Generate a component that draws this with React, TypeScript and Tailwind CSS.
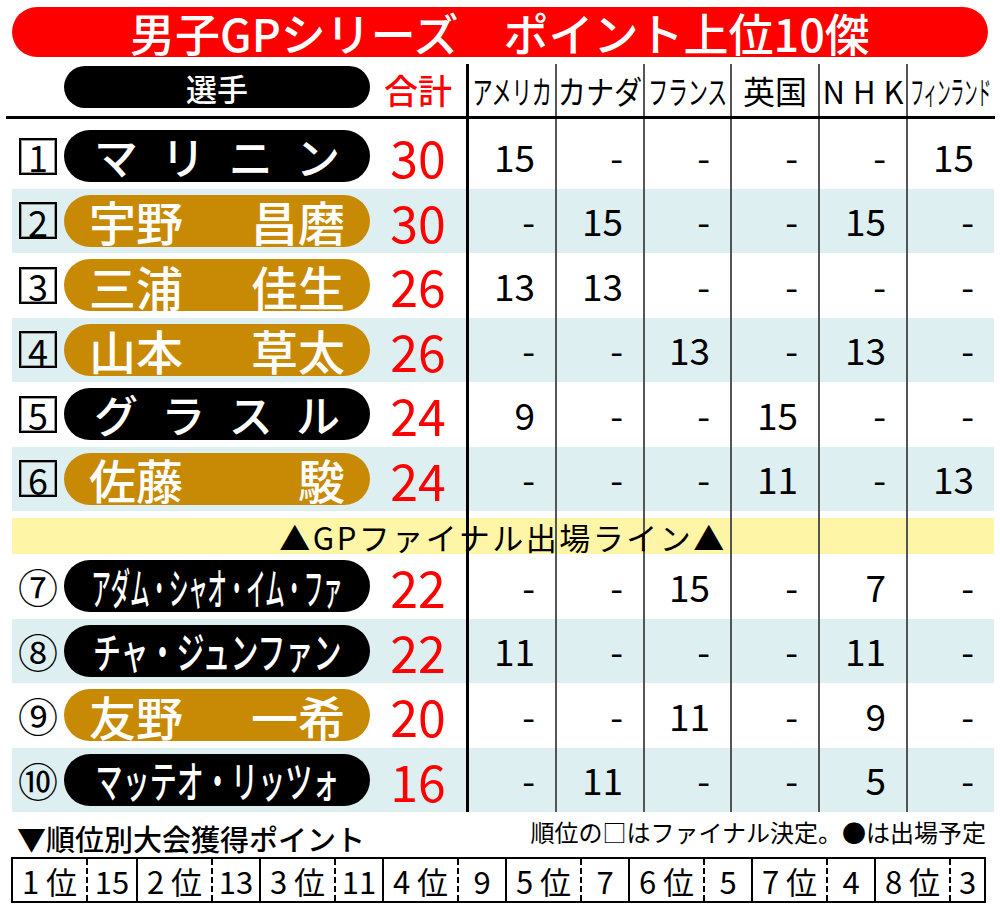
import React from "react";

type Player = {
  rank: number;
  kind: "spread" | "split" | "condensed";
  name: string[];
  scale?: string;
  gold: boolean;
  total: number;
  pts: (number | null)[];
};

const players: Player[] = [
  { rank: 1, kind: "spread", name: ["マ", "リ", "ニ", "ン"], gold: false, total: 30, pts: [15, null, null, null, null, 15] },
  { rank: 2, kind: "split", name: ["宇野", "昌磨"], gold: true, total: 30, pts: [null, 15, null, null, 15, null] },
  { rank: 3, kind: "split", name: ["三浦", "佳生"], gold: true, total: 26, pts: [13, 13, null, null, null, null] },
  { rank: 4, kind: "split", name: ["山本", "草太"], gold: true, total: 26, pts: [null, null, 13, null, 13, null] },
  { rank: 5, kind: "spread", name: ["グ", "ラ", "ス", "ル"], gold: false, total: 24, pts: [9, null, null, 15, null, null] },
  { rank: 6, kind: "split", name: ["佐藤", "駿"], gold: true, total: 24, pts: [null, null, null, 11, null, 13] },
  { rank: 7, kind: "condensed", name: ["アダム・シャオ・イム・ファ"], scale: "scale-x-[0.45]", gold: false, total: 22, pts: [null, null, 15, null, 7, null] },
  { rank: 8, kind: "condensed", name: ["チャ・ジュンファン"], scale: "scale-x-[0.65]", gold: false, total: 22, pts: [11, null, null, null, 11, null] },
  { rank: 9, kind: "split", name: ["友野", "一希"], gold: true, total: 20, pts: [null, null, 11, null, 9, null] },
  { rank: 10, kind: "condensed", name: ["マッテオ・リッツォ"], scale: "scale-x-[0.63]", gold: false, total: 16, pts: [null, 11, null, null, 5, null] },
];

const circled: Record<number, string> = { 7: "⑦", 8: "⑧", 9: "⑨", 10: "⑩" };

function GridRow({
  className,
  left,
  cells,
  align,
}: {
  className: string;
  left?: React.ReactNode;
  cells?: React.ReactNode[];
  align?: string;
}) {
  const c = cells ?? [null, null, null, null, null, null];
  return (
    <div className={"grid grid-cols-[454px_89px_88px_87px_88px_88px_88px] " + className}>
      <div className="flex items-center min-w-0">{left}</div>
      {c.map((v, i) => (
        <div
          key={i}
          className={
            "flex items-center min-w-0 " +
            (align ?? "") +
            " " +
            (i === 0 ? "border-l-[3px] border-black" : "border-l-2 border-[#555555]")
          }
        >
          {v}
        </div>
      ))}
    </div>
  );
}

function Name({ p }: { p: Player }) {
  const bg = p.gold ? "bg-[#c88a05]" : "bg-black";
  if (p.kind === "spread") {
    return (
      <div className={"ml-[7px] w-[306px] h-[52px] rounded-full flex items-center justify-between px-[30px] text-white text-[44px] leading-none font-medium " + bg}>
        {p.name.map((ch, i) => (
          <span key={i}>{ch}</span>
        ))}
      </div>
    );
  }
  if (p.kind === "split") {
    return (
      <div className={"ml-[7px] w-[306px] h-[52px] rounded-full flex items-center justify-between pl-[25px] pr-[25px] text-white text-[47px] leading-none font-medium " + bg}>
        <span>{p.name[0]}</span>
        <span>{p.name[1]}</span>
      </div>
    );
  }
  return (
    <div className={"ml-[7px] w-[306px] h-[52px] rounded-full flex items-center justify-center text-white text-[43px] leading-none font-medium " + bg}>
      <span className={"inline-block whitespace-nowrap origin-center " + (p.scale ?? "")}>{p.name[0]}</span>
    </div>
  );
}

function Rank({ r }: { r: number }) {
  if (r <= 6) {
    return (
      <div className="w-[38px] h-[37px] border-2 border-black shadow-[inset_0_0_0_1px_#9a9a9a] flex items-center justify-center text-[36px] leading-none text-black">
        {r}
      </div>
    );
  }
  return (
    <div className="w-[38px] h-[40px] flex items-center justify-center text-[40px] leading-none text-black">
      {circled[r]}
    </div>
  );
}

function Val({ v }: { v: number | null }) {
  return (
    <div className="w-full text-right pr-[20px] text-[37px] leading-none text-black">
      {v === null ? "-" : v}
    </div>
  );
}

function Head({ children, scale }: { children: React.ReactNode; scale?: string }) {
  return (
    <span className={"inline-block whitespace-nowrap origin-center text-[32px] leading-none " + (scale ?? "")}>{children}</span>
  );
}

function PlayerRow({ p, blue }: { p: Player; blue: boolean }) {
  return (
    <GridRow
      className={"h-[64.5px] " + (blue ? "bg-[#ddeff1]" : "bg-white")}
      left={
        <div className="flex items-center w-full pl-[7px]">
          <Rank r={p.rank} />
          <Name p={p} />
          <div className="flex-1 flex justify-center">
            <span className="text-[50px] leading-[52px] text-[#ff0000]">{p.total}</span>
          </div>
        </div>
      }
      cells={p.pts.map((v, k) => <Val key={k} v={v} />)}
    />
  );
}

export default function App() {
  const bottom = [
    ["1", "15"],
    ["2", "13"],
    ["3", "11"],
    ["4", "9"],
    ["5", "7"],
    ["6", "5"],
    ["7", "4"],
    ["8", "3"],
  ];
  return (
    <div className="w-[1000px] h-[912px] bg-white text-black overflow-hidden font-['Noto_Sans_CJK_JP','Noto_Sans',sans-serif]">
      {/* title */}
      <div className="pt-[7px] pl-[12px] pr-[12px]">
        <div className="h-[50px] rounded-full bg-[#ff0000] flex items-center justify-center text-white text-[45px] leading-none font-medium whitespace-nowrap">
          男子GPシリーズ　ポイント上位10傑
        </div>
      </div>

      <div className="mt-[7px] ml-[12px] w-[982px]">
        {/* header */}
        <GridRow
          className="h-[52px]"
          align="justify-center"
          left={
            <div className="flex items-center w-full pl-[52px]">
              <div className="w-[306px] h-[42px] -mt-[6px] rounded-full bg-black flex items-center justify-center text-white text-[31px] leading-none font-medium">
                選手
              </div>
              <div className="flex-1 text-center text-[34px] leading-none text-[#ff0000] font-medium">合計</div>
            </div>
          }
          cells={[
            <Head scale="scale-x-[0.63]">アメリカ</Head>,
            <Head scale="scale-x-[0.88]">カナダ</Head>,
            <Head scale="scale-x-[0.62]">フランス</Head>,
            <Head>英国</Head>,
            <span className="inline-block whitespace-nowrap text-[31px] leading-none tracking-[8px] pl-[8px]">NHK</span>,
            <Head scale="scale-x-[0.42]">フィンランド</Head>,
          ]}
        />
        <div className="h-[3px] bg-black -ml-[6px] w-[989px]" />
        <GridRow className="h-[5px]" />

        {players.slice(0, 6).map((p, i) => (
          <PlayerRow key={p.rank} p={p} blue={i % 2 === 1} />
        ))}

        <GridRow className="h-[7px]" />
        <div className="relative">
          <GridRow className="h-[36px] bg-[#fff5a6]" />
          <div className="absolute inset-0 flex items-center justify-center">
            <span className="text-[31px] leading-none tracking-[2.5px] text-black">▲GPファイナル出場ライン▲</span>
          </div>
        </div>

        {players.slice(6).map((p, i) => (
          <PlayerRow key={p.rank} p={p} blue={i % 2 === 1} />
        ))}
      </div>

      {/* bottom */}
      <div className="h-[45px] flex justify-between items-start pl-[17px] pr-[14px]">
        <div className="mt-[12px] text-[29px] leading-none font-medium">▼順位別大会獲得ポイント</div>
        <div className="mt-[8px] text-[24px] leading-none">順位の□はファイナル決定。●は出場予定</div>
      </div>
      <div className="ml-[11px] w-[975px] h-[46px] border-2 border-black grid grid-cols-[123px_123px_123px_123px_123px_123px_123px_1fr]">
        {bottom.map(([r, pt], i) => (
          <div key={r} className={"flex min-w-0 " + (i === 0 ? "" : "border-l-2 border-black")}>
            <div className="w-[73px] flex items-center justify-center text-[31px] leading-none whitespace-nowrap">
              {r}&nbsp;位
            </div>
            <div className="flex-1 border-l-2 border-dashed border-black flex items-center justify-center text-[31px] leading-none">
              {pt}
            </div>
          </div>
        ))}
      </div>
    </div>
  );
}
